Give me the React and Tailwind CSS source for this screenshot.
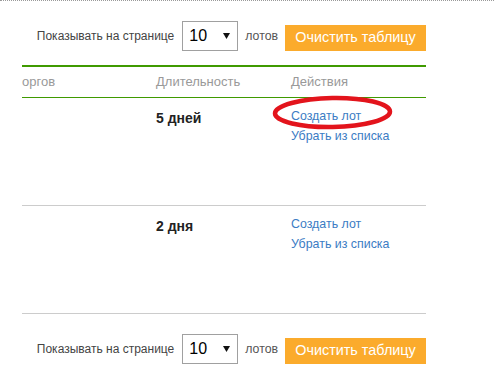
import React from 'react';

function Controls() {
  return (
    <div className="flex items-center justify-end text-[12.3px] text-[#333]">
      <span className="text-[12px] text-[#444]">Показывать на странице</span>
      <div className="ml-[8px] flex h-[30px] w-[56px] items-center justify-between border border-[#a0a0a0] pl-[6px] pr-[7px]">
        <span className="text-[16px] text-black">10</span>
        <svg width="7" height="6" viewBox="0 0 7 6">
          <path d="M0 0 L7 0 L3.5 6 Z" fill="#111" />
        </svg>
      </div>
      <span className="ml-[7px] text-[#555]">лотов</span>
      <button className="ml-[7px] mt-[4px] h-[26px] w-[141px] bg-[#fbab2c] text-[14.4px] text-white">
        Очистить таблицу
      </button>
    </div>
  );
}

function Row({ duration }) {
  return (
    <div className="grid h-[108px] grid-cols-[134px_135px_1fr] border-b border-[#cccccc]">
      <div></div>
      <div className="pt-[10px] text-[14px] font-bold leading-[20px] text-[#222]">{duration}</div>
      <div className="flex flex-col pt-[8px] text-[12.4px] leading-[20px] text-[#3b7cc4]">
        <a>Создать лот</a>
        <a>Убрать из списка</a>
      </div>
    </div>
  );
}

export default function App() {
  return (
    <div className="relative h-[378px] w-[494px] overflow-hidden border-t border-dotted border-[#9a9a9a] bg-white font-['Liberation_Sans',Arial,sans-serif]">
      <div className="ml-[22px] w-[404px] pt-[20px]">
        <Controls />

        <div className="mt-[14px] border-t-2 border-[#3f9a00]">
          <div className="grid h-[31px] grid-cols-[134px_135px_1fr] items-center border-b border-[#3f9a00] text-[13px] text-[#999]">
            <span>оргов</span>
            <span>Длительность</span>
            <span>Действия</span>
          </div>
          <Row duration="5 дней" />
          <Row duration="2 дня" />
        </div>

        <div className="mt-[20px]">
          <Controls />
        </div>
      </div>

      {/* red annotation ellipse */}
      <svg className="pointer-events-none absolute left-[270px] top-[93px]" width="126" height="38" viewBox="0 0 126 38">
        <ellipse cx="62.5" cy="18.5" rx="57.5" ry="14.5" fill="none" stroke="#e3141c" strokeWidth="4.5" transform="rotate(-1 62.5 18.5)" />
      </svg>
    </div>
  );
}
